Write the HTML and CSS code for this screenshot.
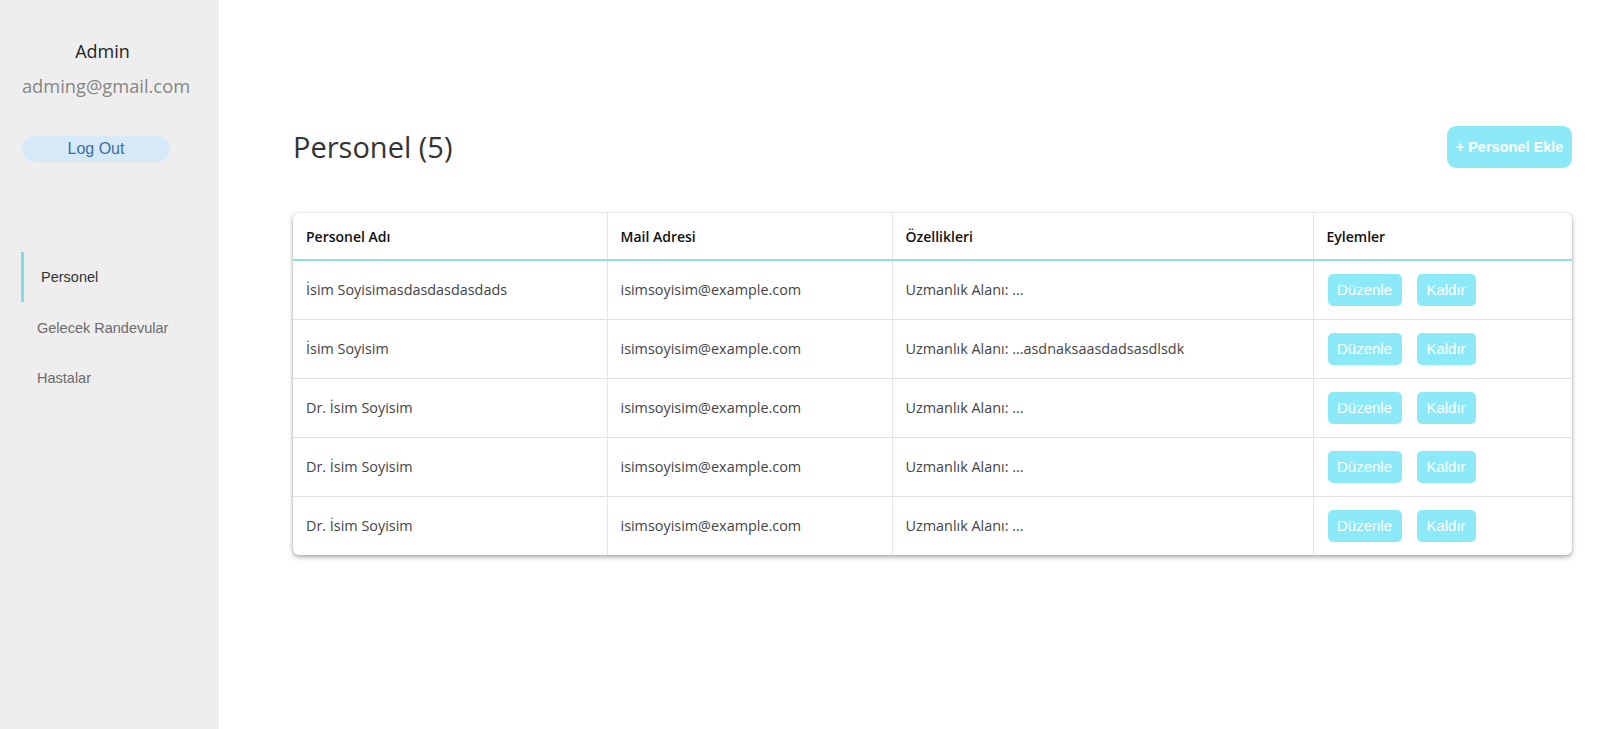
FILE: index.html
```html
<!DOCTYPE html>
<html lang="tr">
<head>
<meta charset="utf-8">
<title>Personel</title>
<link rel="stylesheet" href="styles.css">
</head>
<body>
<div class="layout">
  <aside class="sidebar">
    <div class="profile">
      <div class="profile-name">Admin</div>
      <div class="profile-mail">adming@gmail.com</div>
    </div>
    <button class="logout">Log Out</button>
    <nav class="nav">
      <a class="nav-item active">Personel</a>
      <a class="nav-item">Gelecek Randevular</a>
      <a class="nav-item">Hastalar</a>
    </nav>
  </aside>
  <main class="main">
    <div class="page-head">
      <h1 class="page-title">Personel (5)</h1>
      <button class="add-btn">+ Personel Ekle</button>
    </div>
    <div class="table-card">
      <table class="table">
        <colgroup>
          <col class="c1"><col class="c2"><col class="c3"><col class="c4">
        </colgroup>
        <thead>
          <tr><th>Personel Adı</th><th>Mail Adresi</th><th>Özellikleri</th><th>Eylemler</th></tr>
        </thead>
        <tbody>
          <tr><td>İsim Soyisimasdasdasdasdads</td><td>isimsoyisim@example.com</td><td>Uzmanlık Alanı: ...</td><td class="actions"><button class="act act-edit">Düzenle</button><button class="act act-del">Kaldır</button></td></tr>
          <tr><td>İsim Soyisim</td><td>isimsoyisim@example.com</td><td>Uzmanlık Alanı: ...asdnaksaasdadsasdlsdk</td><td class="actions"><button class="act act-edit">Düzenle</button><button class="act act-del">Kaldır</button></td></tr>
          <tr><td>Dr. İsim Soyisim</td><td>isimsoyisim@example.com</td><td>Uzmanlık Alanı: ...</td><td class="actions"><button class="act act-edit">Düzenle</button><button class="act act-del">Kaldır</button></td></tr>
          <tr><td>Dr. İsim Soyisim</td><td>isimsoyisim@example.com</td><td>Uzmanlık Alanı: ...</td><td class="actions"><button class="act act-edit">Düzenle</button><button class="act act-del">Kaldır</button></td></tr>
          <tr><td>Dr. İsim Soyisim</td><td>isimsoyisim@example.com</td><td>Uzmanlık Alanı: ...</td><td class="actions"><button class="act act-edit">Düzenle</button><button class="act act-del">Kaldır</button></td></tr>
        </tbody>
      </table>
    </div>
  </main>
</div>
</body>
</html>
```
FILE: styles.css
```css
* { box-sizing: border-box; }
html, body { margin: 0; padding: 0; height: 100%; }
body {
  font-family: "Open Sans", "Liberation Sans", sans-serif;
  background: #ffffff;
  color: #333;
}
.layout {
  display: flex;
  min-height: 100vh;
}
.sidebar {
  width: 219px;
  flex: 0 0 219px;
  background: #eeeeee;
  display: flex;
  flex-direction: column;
  padding-top: 38px;
}
.profile {
  text-align: center;
  padding-right: 14px;
}
.profile-name {
  font-size: 18px;
  line-height: 26px;
  color: #1e1e1e;
}
.profile-mail {
  font-size: 18.3px;
  line-height: 26px;
  margin-top: 9px;
  padding-left: 7px;
  color: #858585;
}
.logout {
  margin: 37px 0 0 22px;
  width: 148px;
  height: 26px;
  border: none;
  border-radius: 13px;
  background: #d6e9f8;
  color: #3d6ea3;
  font-family: "Liberation Sans", Arial, sans-serif;
  font-size: 16px;
  padding: 0;
}
.nav {
  display: flex;
  flex-direction: column;
  margin-top: 90px;
  margin-left: 21px;
}
.nav-item {
  display: flex;
  align-items: center;
  height: 50px;
  font-family: "Liberation Sans", Arial, sans-serif;
  font-size: 14.5px;
  color: #6b6b6b;
  border-left: 3px solid transparent;
  margin-left: -3px;
  padding-left: 16px;
}
.nav-item.active {
  color: #333;
  border-left: 3px solid #7fdcea;
  margin-left: 0;
  padding-left: 17px;
  margin-bottom: 1px;
}
.main {
  flex: 1;
  padding: 126px 28px 40px 73px;
}
.page-head {
  display: flex;
  align-items: center;
  justify-content: space-between;
  height: 41px;
  margin-left: 1px;
}
.page-title {
  margin: 0;
  font-size: 29px;
  font-weight: 400;
  color: #333;
  line-height: 40px;
}
.add-btn {
  width: 125px;
  height: 42px;
  border: none;
  border-radius: 9px;
  background: #8ceaf8;
  color: #ffffff;
  font-family: "Liberation Sans", Arial, sans-serif;
  font-weight: 700;
  font-size: 14.5px;
  padding: 0;
}
.table-card {
  margin-top: 46px;
  margin-left: 1px;
  background: #fff;
  border-radius: 6px;
  box-shadow: 0 2px 5px rgba(0, 0, 0, 0.35), 0 0 2px rgba(0,0,0,0.12);
  overflow: hidden;
}
.table {
  width: 100%;
  border-collapse: collapse;
  table-layout: fixed;
}
.c1 { width: 314px; }
.c2 { width: 285px; }
.c3 { width: 421px; }
.c4 { width: auto; }
.table th {
  text-align: left;
  font-weight: 600;
  font-size: 14px;
  color: #111;
  height: 47px;
  padding: 0 13px;
  border-bottom: 2px solid #8fdde6;
  border-left: 1px solid #e4e4e4;
}
.table td {
  font-size: 14.4px;
  color: #444;
  height: 59px;
  padding: 0 13px;
  border-left: 1px solid #e4e4e4;
  border-top: 1px solid #e0e0e0;
  white-space: nowrap;
}
.table tbody tr:first-child td { border-top: none; }
.table th:first-child, .table td:first-child { border-left: none; }
.table td.actions {
  padding-left: 14px;
}
.act {
  height: 32px;
  border: none;
  border-radius: 5px;
  background: #8ceaf8;
  color: #ffffff;
  font-family: "Liberation Sans", Arial, sans-serif;
  font-size: 15px;
  padding: 0;
  vertical-align: middle;
}
.act-edit { width: 74px; }
.act-del { width: 59px; margin-left: 15px; }
```
